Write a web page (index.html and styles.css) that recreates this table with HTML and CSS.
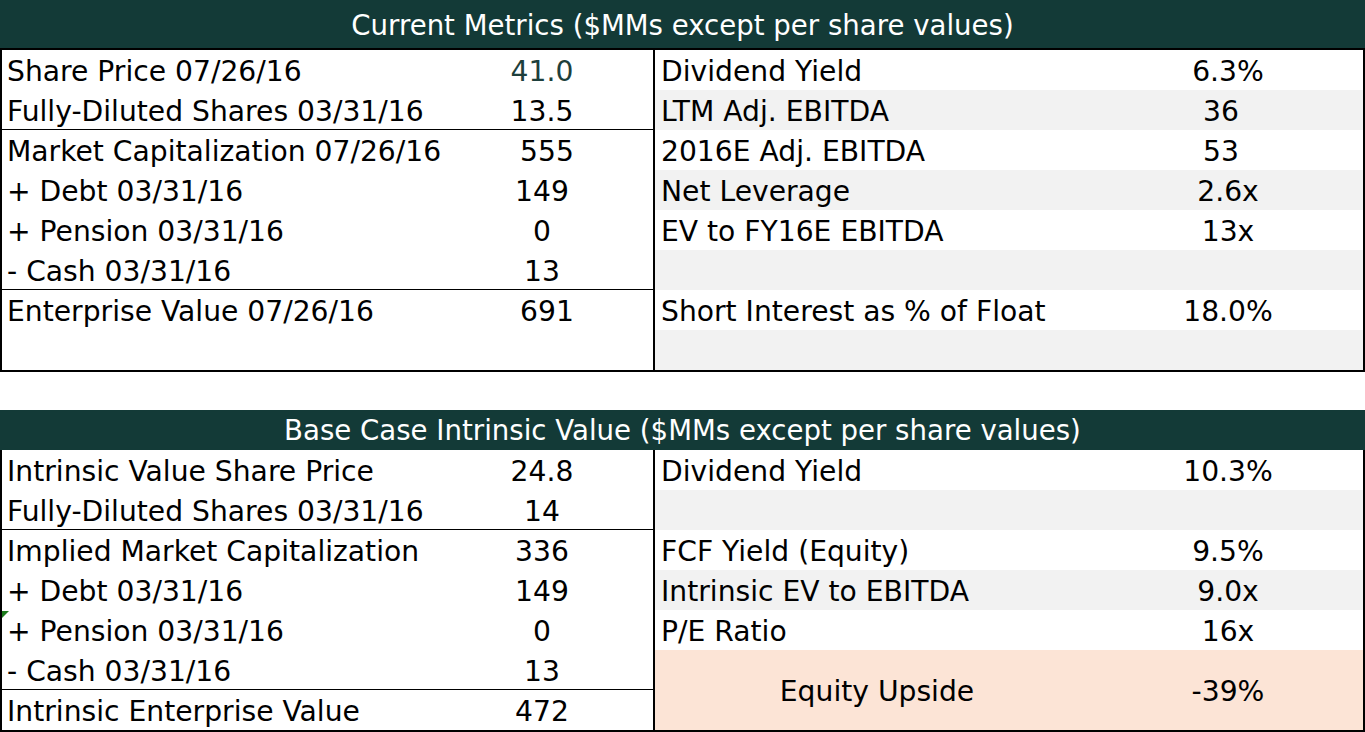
FILE: index.html
```html
<!DOCTYPE html>
<html lang="en">
<head>
<meta charset="utf-8">
<title>Metrics</title>
<link rel="stylesheet" href="styles.css">
</head>
<body>
<section class="panel panel-top">
  <div class="panel-head head-top">Current Metrics ($MMs except per share values)</div>
  <div class="panel-body">
    <div class="col col-left">
      <div class="row"><span class="label">Share Price 07/26/16</span><span class="val accent">41.0</span></div>
      <div class="row rule"><span class="label">Fully-Diluted Shares 03/31/16</span><span class="val">13.5</span></div>
      <div class="row"><span class="label">Market Capitalization 07/26/16</span><span class="val trail-l">555</span></div>
      <div class="row"><span class="label">+ Debt 03/31/16</span><span class="val">149</span></div>
      <div class="row"><span class="label">+ Pension 03/31/16</span><span class="val">0</span></div>
      <div class="row rule"><span class="label">- Cash 03/31/16</span><span class="val">13</span></div>
      <div class="row"><span class="label">Enterprise Value 07/26/16</span><span class="val trail-l">691</span></div>
      <div class="row"></div>
    </div>
    <div class="col col-right">
      <div class="row"><span class="label">Dividend Yield</span><span class="val">6.3%</span></div>
      <div class="row alt"><span class="label">LTM Adj. EBITDA</span><span class="val trail">36</span></div>
      <div class="row"><span class="label">2016E Adj. EBITDA</span><span class="val trail">53</span></div>
      <div class="row alt"><span class="label">Net Leverage</span><span class="val">2.6x</span></div>
      <div class="row"><span class="label">EV to FY16E EBITDA</span><span class="val">13x</span></div>
      <div class="row alt"></div>
      <div class="row"><span class="label">Short Interest as % of Float</span><span class="val">18.0%</span></div>
      <div class="row alt"></div>
    </div>
  </div>
</section>

<section class="panel panel-bottom">
  <div class="panel-head head-bottom">Base Case Intrinsic Value ($MMs except per share values)</div>
  <div class="panel-body">
    <div class="col col-left">
      <div class="row"><span class="label">Intrinsic Value Share Price</span><span class="val">24.8</span></div>
      <div class="row rule"><span class="label">Fully-Diluted Shares 03/31/16</span><span class="val">14</span></div>
      <div class="row"><span class="label">Implied Market Capitalization</span><span class="val">336</span></div>
      <div class="row"><span class="label">+ Debt 03/31/16</span><span class="val">149</span></div>
      <div class="row flagged"><span class="label">+ Pension 03/31/16</span><span class="val">0</span></div>
      <div class="row rule"><span class="label">- Cash 03/31/16</span><span class="val">13</span></div>
      <div class="row"><span class="label">Intrinsic Enterprise Value</span><span class="val">472</span></div>
    </div>
    <div class="col col-right">
      <div class="row"><span class="label">Dividend Yield</span><span class="val">10.3%</span></div>
      <div class="row alt"></div>
      <div class="row"><span class="label">FCF Yield (Equity)</span><span class="val">9.5%</span></div>
      <div class="row alt"><span class="label">Intrinsic EV to EBITDA</span><span class="val">9.0x</span></div>
      <div class="row"><span class="label">P/E Ratio</span><span class="val">16x</span></div>
      <div class="row upside"><span class="label">Equity Upside</span><span class="val">-39%</span></div>
    </div>
  </div>
</section>
</body>
</html>
```

FILE: styles.css
```css
* {
  box-sizing: border-box;
}

html, body {
  margin: 0;
  padding: 0;
  background: #ffffff;
}

body {
  width: 1365px;
  height: 732px;
  overflow: hidden;
  font-family: "DejaVu Sans", Verdana, sans-serif;
  font-size: 28.2px;
  color: #000;
}

.panel {
  width: 1365px;
  border-left: 2px solid #000;
  border-right: 2px solid #000;
  border-bottom: 2px solid #000;
}

.panel-bottom {
  margin-top: 38px;
}

.panel-head {
  background: #133a37;
  color: #fff;
  font-size: 27.6px;
  display: flex;
  align-items: center;
  justify-content: center;
  margin-left: -2px;
  margin-right: -2px;
  white-space: nowrap;
}

.head-top {
  height: 50px;
  padding-top: 3px;
  border-bottom: 2px solid #000;
}

.head-bottom {
  height: 40px;
  padding-top: 1px;
}

.panel-body {
  display: grid;
  grid-template-columns: 653px minmax(0, 1fr);
}

.col-left {
  border-right: 2px solid #000;
}

.row {
  position: relative;
  height: 40px;
  display: grid;
  align-items: center;
  padding-top: 3px;
  white-space: nowrap;
}

.col-left .row {
  grid-template-columns: minmax(0, 1fr) 222px;
  padding-left: 5px;
}

.col-right .row {
  grid-template-columns: minmax(0, 1fr) 270px;
  padding-left: 6px;
}

.val {
  text-align: center;
}

.val.trail {
  padding-right: 14px;
}

.val.trail-l {
  padding-left: 10px;
}

.accent {
  color: #1d3f3c;
}

.alt {
  background: #f2f2f2;
}

.rule {
  border-bottom: 1px solid #000;
}

.rule::after {
  content: "";
  position: absolute;
  right: -9px;
  bottom: -1px;
  width: 7px;
  height: 1px;
  background: #000;
}

.flagged::before {
  content: "";
  position: absolute;
  left: 0;
  top: 1px;
  width: 0;
  height: 0;
  border-top: 7px solid #1c7a1c;
  border-right: 7px solid transparent;
}

.upside {
  height: 80px;
  background: #fce4d6;
}

.upside .label {
  text-align: center;
}
```
